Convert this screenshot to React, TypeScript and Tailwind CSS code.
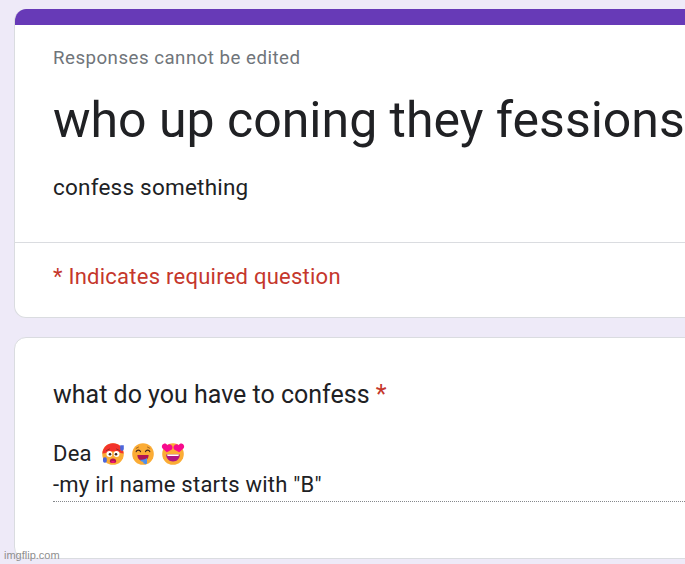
function HotFace() {
  return (
    <svg viewBox="0 0 24 24" className="h-6 w-6">
      <circle cx="12" cy="12" r="10.8" fill="#fbac35" />
      <path d="M1.4 11.5C2 5.200 6.400 1.200 12 1.200s10 4 10.600 10.300c-3-.2-4.600-1-6.400-2H7.800c-1.800 1-3.400 1.800-6.400 2z" fill="#f3332c" />
      <circle cx="8.400" cy="12" r="2.900" fill="#fff" />
      <circle cx="15.600" cy="12" r="2.900" fill="#fff" />
      <circle cx="9" cy="12.200" r="1.300" fill="#40231c" />
      <circle cx="15" cy="12.200" r="1.300" fill="#40231c" />
      <path d="M5.500 8.500l3-1.500M18.500 8.500l-3-1.500" stroke="#8a2a20" strokeWidth=".8" strokeLinecap="round" />
      <path d="M8.800 19.500a3.200 3 0 0 1 6.400 0c0 2-6.400 2-6.400 0z" fill="#b3124f" />
      <ellipse cx="12" cy="19.900" rx="1.900" ry=".9" fill="#f8127a" />
      <path d="M19.200 3.200h3.600v3.900a1.800 1.800 0 0 1-3.600 0z" fill="#4b66dc" />
      <rect x="2" y="15.200" width="3.800" height="5.600" rx="1.700" fill="#4b66dc" />
    </svg>
  )
}

function DroolingFace() {
  return (
    <svg viewBox="0 0 24 24" className="h-6 w-6">
      <circle cx="12" cy="12" r="10.8" fill="#fbac35" />
      <path d="M5.200 9.600c.7-2 3.600-2 4.300 0M14.500 9.600c.7-2 3.600-2 4.300 0" fill="none" stroke="#40231c" strokeWidth="1.200" strokeLinecap="round" />
      <path d="M5.200 6.300l2.300-1.200M18.800 6.300l-2.300-1.200" stroke="#8a501e" strokeWidth=".8" strokeLinecap="round" />
      <path d="M6.400 13h11.200c0 3.800-2.400 5.800-5.600 5.800S6.400 16.800 6.400 13z" fill="#b01453" />
      <path d="M9.300 17.500c2 .6 4.700-.1 6.700-1.500v5.600c-1.100 1-3.200.7-3.600-.6l-.2-1.200c-1.500 0-2.700-.8-2.900-2.300z" fill="#4d8fef" />
    </svg>
  )
}

function HeartEyesFace() {
  return (
    <svg viewBox="0 0 24 24" className="h-6 w-6">
      <circle cx="12" cy="12" r="10.8" fill="#fbac35" />
      <path d="M5.800 10.300L1.600 6.500C.2 5 .8 2.300 2.900 1.700c1.500-.4 2.800.4 3.500 1.500 1-.9 2.500-1.200 3.800-.3 1.800 1.200 1.600 3.600.3 4.800z" fill="#f70a8d" />
      <path d="M18.200 10.300l4.200-3.800c1.400-1.500.8-4.200-1.300-4.800-1.500-.4-2.800.4-3.500 1.500-1-.9-2.500-1.200-3.800-.3-1.800 1.200-1.600 3.600-.3 4.800z" fill="#f70a8d" />
      <path d="M5.200 12.500h13.600c0 4.400-2.900 6.900-6.800 6.900s-6.800-2.500-6.800-6.900z" fill="#b01482" />
      <path d="M6.200 12.500h11.600v.7a.8.8 0 0 1-.8.8H7a.8.8 0 0 1-.8-.8z" fill="#fff" />
    </svg>
  )
}

export default function App() {
  return (
    <div className="relative h-[564px] w-[685px] overflow-hidden bg-[#eeeaf8] pt-[9px] pl-3.5 font-['Roboto',sans-serif] text-[#202124]">
      <main className="flex w-[760px] flex-col gap-[19px]">
        {/* Form header */}
        <section className="h-[309px] overflow-hidden rounded-xl border border-t-0 border-[#dadce0] bg-white">
          <div className="-ml-px h-4 bg-[#673ab7]" />
          <div className="h-[218px] border-b border-[#dadce0] pt-[19px] pl-[38px] whitespace-nowrap">
            <p className="text-[18.7px] leading-[29px] tracking-[0.48px] text-[#70757a]">Responses cannot be edited</p>
            <h1 className="mt-4 text-[50px] leading-[62px]">who up coning they fessions</h1>
            <p className="mt-[21px] text-[22.5px] leading-[31px] tracking-[0.22px]">confess something</p>
          </div>
          <p className="pt-[18px] pl-[38px] text-[22px] leading-[31px] tracking-[0.25px] text-[#c5372c]">
            * Indicates required question
          </p>
        </section>

        {/* Question */}
        <section className="h-[222px] rounded-xl border border-[#dadce0] bg-white pt-[38px] pl-[38px]">
          <h2 className="text-[25px] leading-[37px]">
            what do you have to confess <span className="text-[#c5372c]">*</span>
          </h2>
          <div className="mt-[25px] border-b border-dotted border-[#85888c] pb-px text-[22px] leading-[31px] tracking-[0.23px]">
            <div className="flex items-center">
              <span className="w-[47.5px]">Dea</span>
              <span className="flex gap-[6.3px]">
                <HotFace />
                <DroolingFace />
                <HeartEyesFace />
              </span>
            </div>
            <p>-my irl name starts with "B"</p>
          </div>
        </section>
      </main>

      <span className="absolute bottom-0.5 left-1 font-['Liberation_Sans',sans-serif] text-[11px] leading-[14px] text-[#8f8f8f]">
        imgflip.com
      </span>
    </div>
  )
}
